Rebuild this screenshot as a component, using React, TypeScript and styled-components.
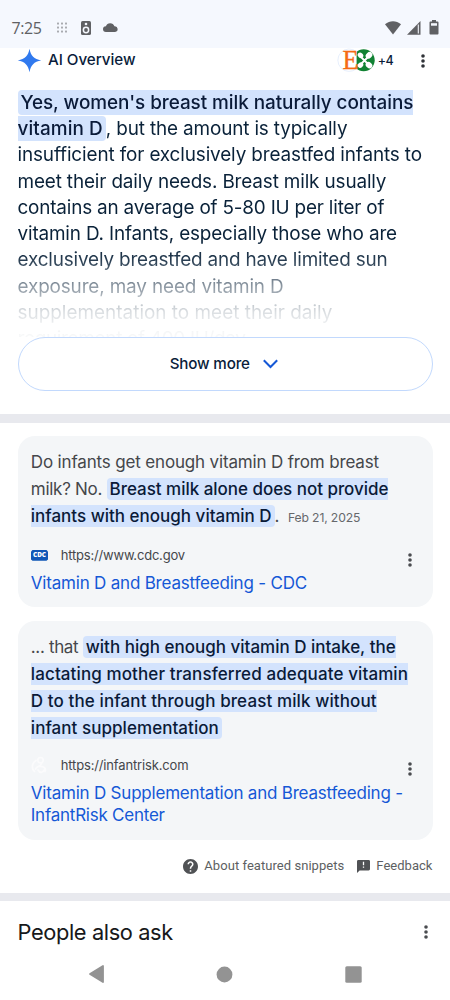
import React from 'react';
import styled, { createGlobalStyle } from 'styled-components';

const GlobalStyle = createGlobalStyle`
  * { box-sizing: border-box; }
  body { margin: 0; background: #fff; font-family: Inter, "Open Sans", sans-serif; }
`;

const Screen = styled.div`
  display: flex;
  flex-direction: column;
  width: 450px;
  height: 1000px;
  overflow: hidden;
  background: #fff;
`;

const StatusBar = styled.header`
  display: flex;
  flex: none;
  align-items: center;
  height: 48px;
  padding: 7px 9px 0 11.5px;
  background: #f5f8fe;
  color: #606164;
`;

const Clock = styled.span`
  width: 45.5px;
  font: 400 16px/20px "Open Sans", sans-serif;
  letter-spacing: -0.4px;
`;

const StatusGroup = styled.div<{ $gap: number }>`
  display: flex;
  align-items: center;
  gap: ${p => p.$gap}px;
  svg { display: block; }
`;

const Spacer = styled.div`
  flex: 1;
`;

const Header = styled.div`
  display: flex;
  flex: none;
  align-items: center;
  height: 25px;
  padding: 0 21px 0 17px;
  svg { display: block; flex: none; overflow: visible; }
`;

const HeaderTitle = styled.h2`
  margin: -1px 0 0 6px;
  font-size: 15.2px;
  font-weight: 500;
  line-height: 24px;
  letter-spacing: -0.04px;
  color: #0a1d3a;
`;

const MoreCount = styled.span`
  margin: 0 24px 0 2px;
  font-size: 12.5px;
  font-weight: 500;
  line-height: 20px;
  letter-spacing: -0.6px;
  color: #0a1d3a;
`;

const Overview = styled.div`
  flex: none;
  height: 264px;
  padding: 16.8px 17.5px 0;
  overflow: hidden;
  color: #0a2239;
  font-size: 18.9px;
  mask-image: linear-gradient(
    #000 170px, rgba(0, 0, 0, 0.88) 187px, rgba(0, 0, 0, 0.47) 213px,
    rgba(0, 0, 0, 0.15) 239px, rgba(0, 0, 0, 0.04) 258px, rgba(0, 0, 0, 0.03) 264px
  );
`;

const Line = styled.div<{ $track?: number; $height?: number }>`
  height: ${p => p.$height ?? 26.25}px;
  line-height: ${p => p.$height ?? 26.25}px;
  letter-spacing: ${p => p.$track ?? 0}px;
  white-space: nowrap;
`;

const Mark = styled.mark<{ $start?: boolean; $end?: boolean; $track?: number }>`
  padding: 1px ${p => (p.$end ? 3 : 0)}px 1px ${p => (p.$start ? 3 : 0)}px;
  border-radius: ${p => `${p.$start ? 4 : 0}px ${p.$end ? 4 : 0}px ${p.$end ? 4 : 0}px ${p.$start ? 4 : 0}px`};
  background: #d3e3fd;
  color: #0a1a38;
  font-weight: 500;
  letter-spacing: ${p => p.$track ?? 0}px;
`;

const ShowMore = styled.button`
  display: flex;
  flex: none;
  align-items: center;
  justify-content: center;
  gap: 13px;
  height: 54px;
  margin: 0 17px 23px 17.5px;
  padding: 0 3px 0 0;
  border: 1px solid #c2d9fd;
  border-radius: 27px;
  background: #fff;
  color: #0a1d3a;
  font: 500 15.2px/20px Inter, sans-serif;
  letter-spacing: -0.17px;
`;

const Divider = styled.div`
  flex: none;
  height: 8.5px;
  background: #e8e9ee;
`;

const Cards = styled.section`
  display: flex;
  flex: none;
  flex-direction: column;
  gap: 14px;
  padding: 13.5px 17px 0 17.5px;
`;

const Card = styled.article<{ $height: number }>`
  height: ${p => p.$height}px;
  padding: 13.3px 13.3px 0;
  border-radius: 17px;
  background: #f4f6f8;
  color: #45474b;
  font-size: 17px;
`;

const DateText = styled.span`
  margin-left: 8.5px;
  font-size: 12.2px;
  letter-spacing: -0.15px;
  color: #66686c;
`;

const Source = styled.div<{ $top: number }>`
  display: flex;
  align-items: center;
  height: 22px;
  margin-top: ${p => p.$top}px;
  svg { display: block; }
`;

const SourceIcon = styled.div`
  width: 30px;
`;

const Url = styled.span<{ $track: number }>`
  font-size: 13px;
  line-height: 20px;
  letter-spacing: ${p => p.$track}px;
`;

const DotsSlot = styled.div`
  margin-left: auto;
  padding: 9px 8px 0 0;
`;

const ResultLink = styled.a<{ $top: number }>`
  display: block;
  margin-top: ${p => p.$top}px;
  color: #1558d6;
`;

const SnippetFooter = styled.div`
  display: flex;
  flex: none;
  align-items: center;
  justify-content: flex-end;
  height: 52.5px;
  padding-right: 17.5px;
  color: #5d5f62;
  font: 400 13px/20px Roboto, sans-serif;
  svg { display: block; margin-right: 6px; }
`;

const FooterItem = styled.div<{ $left?: number; $track: number }>`
  display: flex;
  align-items: center;
  margin-left: ${p => p.$left ?? 0}px;
  letter-spacing: ${p => p.$track}px;
`;

const AskHeader = styled.div`
  display: flex;
  flex: none;
  align-items: center;
  justify-content: space-between;
  height: 46px;
  padding: 15px 22px 0 17.5px;
`;

const AskTitle = styled.h2`
  margin: 0;
  color: #17181a;
  font-size: 21.8px;
  font-weight: 440;
  line-height: 30px;
  letter-spacing: -0.38px;
`;

const NavBar = styled.nav`
  display: flex;
  flex: none;
  align-items: center;
  justify-content: space-between;
  height: 54px;
  padding: 0 88px 0 87.5px;
  svg { display: block; }
`;

const Dots = ({ color = '#4a4c50' }: { color?: string }) => (
  <svg width="4" height="14" viewBox="0 0 4 14" fill={color}>
    <circle cx="2" cy="2" r="1.8" />
    <circle cx="2" cy="7" r="1.8" />
    <circle cx="2" cy="12" r="1.8" />
  </svg>
);

const GridIcon = () => (
  <svg width="10" height="11" viewBox="0 0 10 11" fill="#a9abb0">
    {[1, 5, 9].map(x => [1.5, 5.5, 9.5].map(y => <rect key={`${x}-${y}`} x={x - 1} y={y - 1} width="2" height="2" rx=".5" />))}
  </svg>
);

const SpeakerIcon = () => (
  <svg width="10" height="14" viewBox="0 0 10 14">
    <rect width="10" height="14" rx="1.6" fill="#606164" />
    <circle cx="5" cy="3" r="1.3" fill="#f5f8fe" />
    <circle cx="5" cy="9" r="3.4" fill="#f5f8fe" />
    <circle cx="5" cy="9" r="1.9" fill="#606164" />
  </svg>
);

const CloudIcon = () => (
  <svg width="15" height="9" viewBox="0 0 15 9">
    <path d="M2.900 9a2.900 2.900 0 0 1 0-5.800A4.500 4.500 0 0 1 11.400 3.300a2.850 2.850 0 0 1 .7 5.700Z" fill="#606164" />
  </svg>
);

const Sparkle = () => (
  <svg width="25" height="25" viewBox="0 0 25 25">
    <path d="M12.500 .8C13.800 8 17 11.200 24.200 12.500 17 13.800 13.800 17 12.500 24.200 11.200 17 8 13.800.8 12.500 8 11.200 11.200 8 12.500.8Z" fill="#3079ee" />
  </svg>
);

const SourceLogos = () => (
  <svg width="38" height="25" viewBox="0 0 38 25">
    <circle cx="25.7" cy="12.2" r="11" fill="#118233" />
    <g stroke="#fff" strokeWidth="1.8" strokeLinecap="round">
      <path d="M22 8 31 17M31 8 22 17" />
    </g>
    <g fill="#fff">
      <ellipse cx="31" cy="7.300" rx="3.600" ry="2.900" transform="rotate(-42 31 7.300)" />
      <ellipse cx="31" cy="17.100" rx="3.600" ry="2.900" transform="rotate(42 31 17.100)" />
      <ellipse cx="22.500" cy="7.300" rx="3" ry="2.500" transform="rotate(42 22.500 7.300)" />
      <ellipse cx="22.500" cy="17.100" rx="3" ry="2.500" transform="rotate(-42 22.500 17.100)" />
    </g>
    <path d="M18.600 3.900A11.200 11.200 0 1 0 18.600 20.500Z" fill="#fff" />
    <path d="M18.600 3.900A11.200 11.200 0 1 0 18.600 20.500" fill="none" stroke="#dce8fa" strokeWidth=".7" />
    <text x="4.400" y="21.400" fontFamily="Liberation Serif, serif" fontSize="27" textLength="16" lengthAdjust="spacingAndGlyphs" fill="#f56b12" stroke="#f56b12" strokeWidth=".3">E</text>
  </svg>
);

const CdcIcon = () => (
  <svg width="17" height="11" viewBox="0 0 17 11" overflow="visible">
    <path d="M1.500 0H15.500L17 1.500V9.500L15.500 10.800H1.500L0 9.500V1.500Z" fill="#1057b7" />
    <text x="8.500" y="7.100" textAnchor="middle" fontFamily="Open Sans, sans-serif" fontWeight="800" fontSize="6.300" textLength="13" lengthAdjust="spacingAndGlyphs" fill="#fff">CDC</text>
  </svg>
);

const InfantRiskIcon = () => (
  <svg width="17" height="18" viewBox="0 0 17 18" fill="none" stroke="#fbfbfc" strokeWidth="1.700" strokeLinecap="round">
    <circle cx="9.500" cy="4.200" r="2.700" />
    <path d="M5 4.500C1 7 0 12 3.500 15.500M10.500 7.500C9 11 6 10 4.500 13M8.500 10.500C12 10 15.500 12 14 15.500M7 14C9 17.500 12 17 13 14" />
  </svg>
);

export default function App() {
  return (
    <Screen>
      <GlobalStyle />
      <StatusBar>
        <Clock>7:25</Clock>
        <StatusGroup $gap={14}>
          <GridIcon />
          <StatusGroup $gap={11.5}>
            <SpeakerIcon />
            <CloudIcon />
          </StatusGroup>
        </StatusGroup>
        <Spacer />
        <StatusGroup $gap={6}>
          <svg width="16" height="14" viewBox="0 0 16 14"><path d="M0 3.2C4.8-.8 11.2-.8 16 3.2L8 13.6Z" fill="#606164" /></svg>
          <svg width="14" height="14" viewBox="0 0 14 14"><path d="M13.5 0V13.7H0Z" fill="#606164" /><path d="M11.3 3.5V12.5" stroke="#f5f8fe" strokeWidth="1.1" /></svg>
          <svg width="14" height="15" viewBox="0 0 14 15"><path d="M5 0H9V1.5H10.6Q11.5 1.5 11.5 2.4V13.6Q11.5 14.5 10.6 14.5H3.4Q2.5 14.5 2.5 13.6V2.4Q2.5 1.5 3.4 1.5H5Z" fill="#606164" /><rect x="4" y="3.2" width="6" height="2.5" fill="#f5f8fe" /></svg>
        </StatusGroup>
      </StatusBar>

      <Header>
        <Sparkle />
        <HeaderTitle>AI Overview</HeaderTitle>
        <Spacer />
        <SourceLogos />
        <MoreCount>+4</MoreCount>
        <svg width="12" height="14" viewBox="-4 0 12 14" fill="#2f3237"><circle cx="2" cy="2" r="1.8" /><circle cx="2" cy="7" r="1.8" /><circle cx="2" cy="12" r="1.8" /></svg>
      </Header>

      <Overview>
        <Line><Mark $start $track={-0.05}>Yes, women's breast milk naturally contains</Mark></Line>
        <Line $track={-0.14}><Mark $end $track={0.1}>vitamin D</Mark>, but the amount is typically</Line>
        <Line $track={-0.12}>insufficient for exclusively breastfed infants to</Line>
        <Line $track={-0.14}>meet their daily needs. Breast milk usually</Line>
        <Line $track={-0.18}>contains an average of 5-80 IU per liter of</Line>
        <Line $track={-0.15}>vitamin D. Infants, especially those who are</Line>
        <Line $track={-0.16}>exclusively breastfed and have limited sun</Line>
        <Line $track={-0.13}>exposure, may need vitamin D</Line>
        <Line $track={0.02}>supplementation to meet their daily</Line>
        <Line $track={-0.3}>requirement of 400 IU/day.</Line>
      </Overview>

      <ShowMore>
        Show more
        <svg width="15" height="10" viewBox="0 0 15 10" fill="none" stroke="#1558d6" strokeWidth="2"><path d="M.8 1.2 7.5 8 14.2 1.2" /></svg>
      </ShowMore>
      <Divider />

      <Cards>
        <Card $height={171}>
          <Line $height={26.8} $track={-0.16}>Do infants get enough vitamin D from breast</Line>
          <Line $height={26.8} $track={-0.28}>milk? No. <Mark $start $track={-0.03}>Breast milk alone does not provide</Mark></Line>
          <Line $height={26.8}><Mark $end>infants with enough vitamin D</Mark>.<DateText>Feb 21, 2025</DateText></Line>
          <Source $top={14.5}>
            <SourceIcon><CdcIcon /></SourceIcon>
            <Url $track={-0.2}>https://www.cdc.gov</Url>
            <DotsSlot><Dots /></DotsSlot>
          </Source>
          <ResultLink $top={6.5}>
            <Line $height={21.8} $track={-0.2}>Vitamin D and Breastfeeding - CDC</Line>
          </ResultLink>
        </Card>

        <Card $height={219}>
          <Line $height={26.8} $track={-0.34}>... that <Mark $start>with high enough vitamin D intake, the</Mark></Line>
          <Line $height={26.8}><Mark $track={0.11}>lactating mother transferred adequate vitamin</Mark></Line>
          <Line $height={26.8}><Mark $track={0.11}>D to the infant through breast milk without</Mark></Line>
          <Line $height={26.8}><Mark $end $track={0.05}>infant supplementation</Mark></Line>
          <Source $top={12.4}>
            <SourceIcon><InfantRiskIcon /></SourceIcon>
            <Url $track={-0.16}>https://infantrisk.com</Url>
            <DotsSlot><Dots /></DotsSlot>
          </Source>
          <ResultLink $top={7.6}>
            <Line $height={21.8} $track={-0.21}>Vitamin D Supplementation and Breastfeeding -</Line>
            <Line $height={21.8} $track={-0.24}>InfantRisk Center</Line>
          </ResultLink>
        </Card>
      </Cards>

      <SnippetFooter>
        <FooterItem $track={0.05}>
          <svg width="15" height="15" viewBox="2 2 20 20" fill="#505255"><path d="M12 2C6.48 2 2 6.48 2 12s4.48 10 10 10 10-4.48 10-10S17.52 2 12 2zm1 17h-2v-2h2v2zm2.07-7.75-.9.92C13.45 12.9 13 13.5 13 15h-2v-.5c0-1.1.45-2.1 1.17-2.83l1.24-1.26c.37-.36.59-.86.59-1.41 0-1.1-.9-2-2-2s-2 .9-2 2H8c0-2.21 1.79-4 4-4s4 1.79 4 4c0 .88-.36 1.68-.93 2.25z" /></svg>
          About featured snippets
        </FooterItem>
        <FooterItem $left={13} $track={0.03}>
          <svg width="13" height="13" viewBox="2 2 20 20" fill="#505255"><path d="M20 2H4c-1.1 0-1.99.9-1.99 2L2 22l4-4h14c1.1 0 2-.9 2-2V4c0-1.1-.9-2-2-2zm-7 12h-2v-2h2v2zm0-4h-2V4.500h2v5.500z" /></svg>
          Feedback
        </FooterItem>
      </SnippetFooter>
      <Divider />

      <AskHeader>
        <AskTitle>People also ask</AskTitle>
        <Dots />
      </AskHeader>

      <NavBar>
        <svg width="17" height="20" viewBox="0 0 17 20"><path d="M15 2V18L2 10Z" fill="#939393" stroke="#939393" strokeWidth="1.8" strokeLinejoin="round" /></svg>
        <svg width="17" height="17" viewBox="0 0 17 17"><circle cx="8.500" cy="8.500" r="7.900" fill="#939393" /></svg>
        <svg width="17" height="17" viewBox="0 0 17 17"><rect x=".300" y=".300" width="16.400" height="16.400" rx="1.500" fill="#939393" /></svg>
      </NavBar>
    </Screen>
  );
}
